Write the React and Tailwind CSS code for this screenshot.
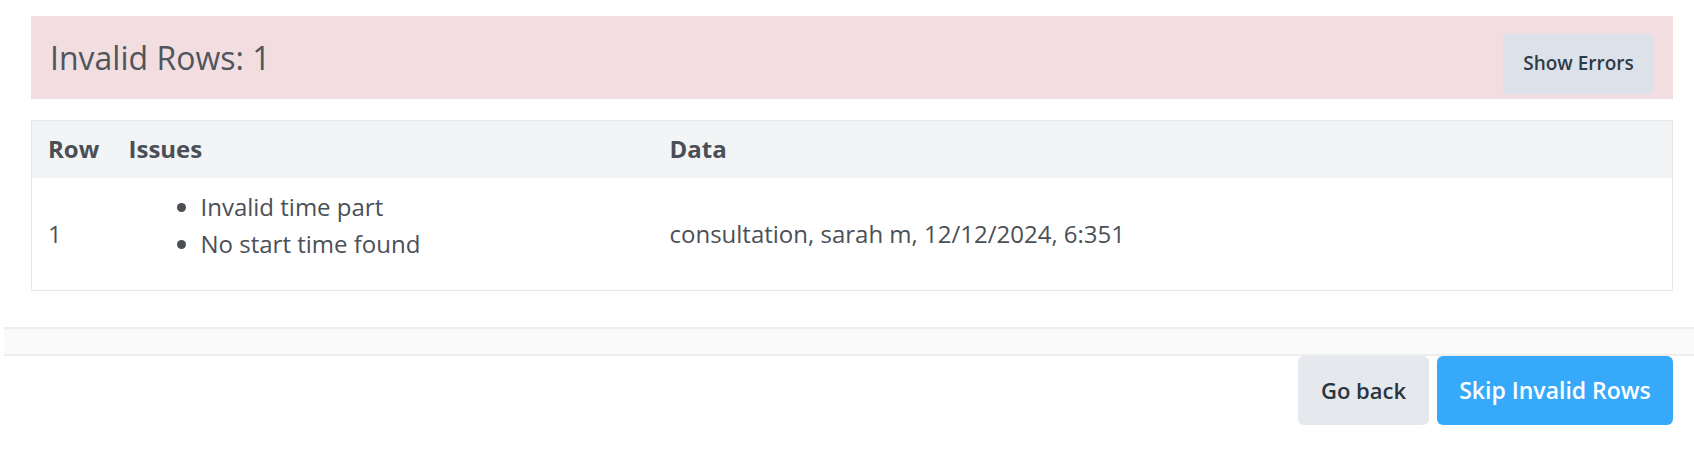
export default function App() {
  const issues = ["Invalid time part", "No start time found"];

  return (
    <div
      className="w-full h-[454px] bg-white text-[#4b5056] overflow-hidden"
      style={{ fontFamily: '"Open Sans", "Noto Sans", sans-serif' }}
    >
      <div className="pt-4 pl-[31px] pr-[21px]">
        {/* invalid rows banner */}
        <div className="h-[83px] bg-[#f2dde0] flex items-center justify-between pl-[19px] pr-[19px]">
          <h2 className="text-[32px] font-normal text-[#4f555b]">Invalid Rows: 1</h2>
          <button className="mt-[12px] h-[60px] w-[151px] rounded bg-[#dde2ea] text-[19px] font-semibold text-[#2f3b46]">
            Show Errors
          </button>
        </div>

        {/* errors table */}
        <table className="mt-[21px] w-full border border-[#e6e8eb] border-collapse text-[24px]">
          <thead>
            <tr className="h-[57px] bg-[#f2f4f5] text-left text-[#4a4f55]">
              <th className="w-[81px] pl-4 font-bold">Row</th>
              <th className="w-[541px] pl-4 font-bold">Issues</th>
              <th className="pl-4 font-bold">Data</th>
            </tr>
          </thead>
          <tbody>
            <tr className="h-[113px]">
              <td className="pl-4">1</td>
              <td className="pl-4">
                <ul className="list-disc pl-[72px] mb-[18px] leading-[37px]">
                  {issues.map((issue) => (
                    <li key={issue}>{issue}</li>
                  ))}
                </ul>
              </td>
              <td className="pl-4">consultation, sarah m, 12/12/2024, 6:351</td>
            </tr>
          </tbody>
        </table>
      </div>

      {/* footer */}
      <div className="mt-9 ml-1 h-[29px] bg-[#fafafa] border-t-2 border-b-2 border-[#eeeeee]"></div>
      <div className="flex justify-end gap-2 pr-[21px]">
        <button className="h-[69px] w-[131px] rounded-md bg-[#e5e8ec] text-[22px] font-semibold text-[#2a3540]">
          Go back
        </button>
        <button className="h-[69px] w-[236px] rounded-md bg-[#37a9fb] text-[23px] font-semibold text-white">
          Skip Invalid Rows
        </button>
      </div>
    </div>
  );
}
